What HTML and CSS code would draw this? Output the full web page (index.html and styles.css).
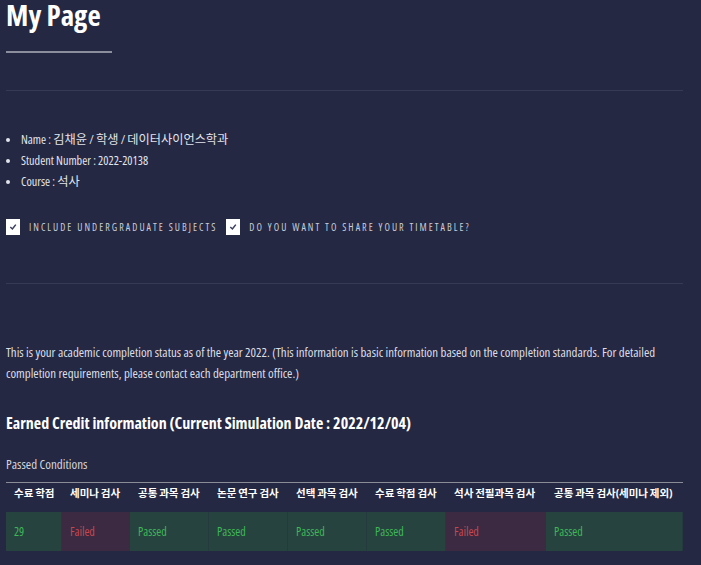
FILE: index.html
```html
<!DOCTYPE html>
<html lang="ko">
<head>
<meta charset="utf-8">
<title>My Page</title>
<link rel="stylesheet" href="styles.css">
</head>
<body>
<main class="page">
  <h1 class="title">My Page</h1>
  <div class="title-bar"></div>
  <hr class="rule rule-top">
  <ul class="info">
    <li>Name : 김채윤 / 학생 / 데이터사이언스학과</li>
    <li>Student Number : 2022-20138</li>
    <li>Course : 석사</li>
  </ul>
  <div class="options">
    <label class="opt"><span class="box"><svg viewBox="0 0 14 16" width="14" height="16"><path d="M4.3 8 L6.4 10 L9.8 5.6" fill="none" stroke="#3a3f5e" stroke-width="1.5"/></svg></span><span class="opt-text">Include undergraduate subjects</span></label>
    <label class="opt"><span class="box"><svg viewBox="0 0 14 16" width="14" height="16"><path d="M4.3 8 L6.4 10 L9.8 5.6" fill="none" stroke="#3a3f5e" stroke-width="1.5"/></svg></span><span class="opt-text">Do you want to share your timetable?</span></label>
  </div>
  <hr class="rule rule-mid">
  <p class="notice">This is your academic completion status as of the year 2022. (This information is basic information based on the completion standards. For detailed completion requirements, please contact each department office.)</p>
  <h2 class="section">Earned Credit information (Current Simulation Date : 2022/12/04)</h2>
  <div class="caption">Passed Conditions</div>
  <table class="cond">
    <colgroup>
      <col class="c1"><col class="c2"><col class="c3"><col class="c4">
      <col class="c5"><col class="c6"><col class="c7"><col class="c8">
    </colgroup>
    <thead>
      <tr>
        <th>수료 학점</th>
        <th>세미나 검사</th>
        <th>공통 과목 검사</th>
        <th>논문 연구 검사</th>
        <th>선택 과목 검사</th>
        <th>수료 학점 검사</th>
        <th>석사 전필과목 검사</th>
        <th>공통 과목 검사(세미나 제외)</th>
      </tr>
    </thead>
    <tbody>
      <tr>
        <td class="ok">29</td>
        <td class="bad">Failed</td>
        <td class="ok">Passed</td>
        <td class="ok">Passed</td>
        <td class="ok">Passed</td>
        <td class="ok">Passed</td>
        <td class="bad">Failed</td>
        <td class="ok">Passed</td>
      </tr>
    </tbody>
  </table>
</main>
</body>
</html>
```

FILE: styles.css
```css
html, body {
  margin: 0;
  padding: 0;
  background: #242842;
  color: #e2e4ec;
  font-family: "Open Sans", "Noto Sans CJK KR", sans-serif;
  font-stretch: 75%;
}
.page {
  width: 677px;
  margin-left: 6px;
}
.title {
  margin: 0;
  font-size: 29px;
  line-height: 30px;
  font-weight: 700;
  color: #ffffff;
}
.title-bar {
  width: 106px;
  height: 2px;
  background: #8b8e9c;
  margin-top: 21px;
}
.rule {
  border: 0;
  height: 1px;
  background: #363b55;
  margin: 0;
}
.rule-top { margin-top: 37px; }
.info {
  margin: 38px 0 0;
  padding: 0 0 0 15px;
  font-size: 12.2px;
  line-height: 21px;
  color: #e2e4ec;
}
.options {
  display: flex;
  gap: 9px;
  margin-top: 27px;
  align-items: center;
}
.opt {
  display: flex;
  align-items: center;
  gap: 9px;
}
.box {
  width: 14px;
  height: 16px;
  background: #ffffff;
  display: block;
}
.box svg { display: block; }
.opt-text {
  font-size: 10px;
  line-height: 16px;
  text-transform: uppercase;
  letter-spacing: 2.02px;
  color: #c9ccd8;
}
.rule-mid { margin-top: 48px; }
.notice {
  margin: 58px 0 0;
  font-size: 12.9px;
  line-height: 21px;
  color: #dcdee7;
}
.section {
  margin: 27px 0 0;
  font-size: 16px;
  line-height: 24px;
  font-weight: 700;
  color: #ffffff;
}
.caption {
  margin-top: 21px;
  font-size: 13px;
  line-height: 16px;
  color: #d3d5df;
}
.cond {
  margin-top: 10px;
  width: 677px;
  border-collapse: separate;
  border-spacing: 0;
  table-layout: fixed;
  border-top: 1px solid #8a8c96;
}
.cond th {
  text-align: left;
  vertical-align: top;
  font-size: 10.5px;
  line-height: 14px;
  font-weight: 700;
  color: #ffffff;
  padding: 3px 0 0 8px;
  height: 26px;
  white-space: nowrap;
}
.cond td {
  font-size: 12px;
  height: 39px;
  padding: 0 0 0 8px;
}
.c1 { width: 56px; }
.c2 { width: 68px; }
.c3 { width: 79px; }
.c4 { width: 79px; }
.c5 { width: 79px; }
.c6 { width: 79px; }
.c7 { width: 100px; }
.c8 { width: 137px; }
.ok {
  background: #27433f;
  color: #3db857;
  box-shadow: inset -1px 0 0 #233b3d;
}
.bad {
  background: #3b2a41;
  color: #c8474f;
}
```
